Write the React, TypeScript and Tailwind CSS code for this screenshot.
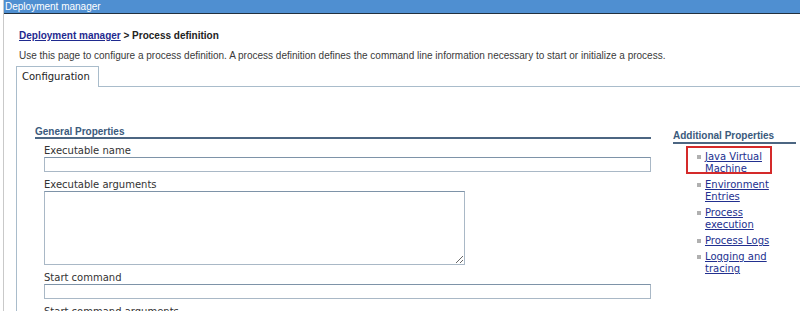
const links = [
  { label: "Java Virtual Machine", boxed: true },
  { label: "Environment Entries" },
  { label: "Process execution" },
  { label: "Process Logs" },
  { label: "Logging and tracing" },
];

const Field = ({ label, area }: { label: string; area?: boolean }) => (
  <div className="flex flex-col">
    <label className="h-[12px] text-[10px] leading-[12px] text-[#333]">{label}</label>
    {area ? (
      <textarea
        className="w-[421px] h-[74px] border border-[#a9b8c6] border-t-[#7e93a8] bg-white outline-none"
        defaultValue=""
      />
    ) : (
      <input
        className="w-[607px] h-[15px] border border-[#a9b8c6] border-t-[#7e93a8] bg-white outline-none"
        defaultValue=""
      />
    )}
  </div>
);

const App = () => {
  return (
    <div className="w-[800px] h-[311px] overflow-hidden bg-white pl-[3px] font-['Liberation_Sans',Arial,sans-serif]">
      <div className="h-full border-l border-[#c9c9c9]">
        <div className="h-[14px] bg-[#4f8fd1] border-b border-[#22303e] text-white text-[10px] leading-[13px] pl-[1px]">
          Deployment manager
        </div>

        <div className="pl-[12px]">
          <div className="mt-[16px] pl-[3px] text-[10px] leading-[12px] font-bold text-[#222]">
            <a href="#" className="text-[#1f2a8f] underline">Deployment manager</a>
            {" > Process definition"}
          </div>
          <p className="mt-[8px] pl-[3px] text-[10px] leading-[12px] text-[#3a3a3a]">
            Use this page to configure a process definition. A process definition defines the command line information necessary to start or initialize a process.
          </p>

          <div className="mt-[4px] flex font-['DejaVu_Sans',sans-serif]">
            <div className="w-[83px] h-[21px] border border-b-0 border-[#a9bccb] pl-[5px] text-[10px] leading-[20px] text-[#222]">
              Configuration
            </div>
            <div className="flex-1 border-b border-[#a9bccb]" />
          </div>

          <div className="h-[300px] border-l border-[#a9bccb] pl-[18px] pt-[39px] flex gap-[22px]">
            <div className="w-[616px]">
              <div className="h-[13px] border-b-2 border-[#4c6682] text-[10px] leading-[11px] font-bold text-[#3a5a7c]">
                General Properties
              </div>
              <div className="pl-[9px] pt-[6px] flex flex-col gap-[7px] font-['DejaVu_Sans',sans-serif]">
                <Field label="Executable name" />
                <Field label="Executable arguments" area />
                <Field label="Start command" />
                <Field label="Start command arguments" />
              </div>
            </div>

            <div className="w-[123px] pt-[4px]">
              <div className="h-[14px] border-b-2 border-[#4c6682] text-[10px] leading-[11px] font-bold text-[#3a5a7c]">
                Additional Properties
              </div>
              <ul className="mt-[7px] flex flex-col gap-[4px] font-['DejaVu_Sans',sans-serif]">
                {links.map((l) => (
                  <li key={l.label} className="relative flex pl-[24px]">
                    {l.boxed && (
                      <span className="absolute left-[13px] top-[-5px] w-[86px] h-[28px] border-2 border-[#d42a2a]" />
                    )}
                    <span className="mt-[4px] w-[4px] h-[4px] bg-[#b0b0b0] shrink-0" />
                    <a href="#" className="ml-[4px] w-[72px] text-[10px] leading-[12px] text-[#22308f] underline">
                      {l.label}
                    </a>
                  </li>
                ))}
              </ul>
            </div>
          </div>
        </div>
      </div>
    </div>
  );
};

export default App;
